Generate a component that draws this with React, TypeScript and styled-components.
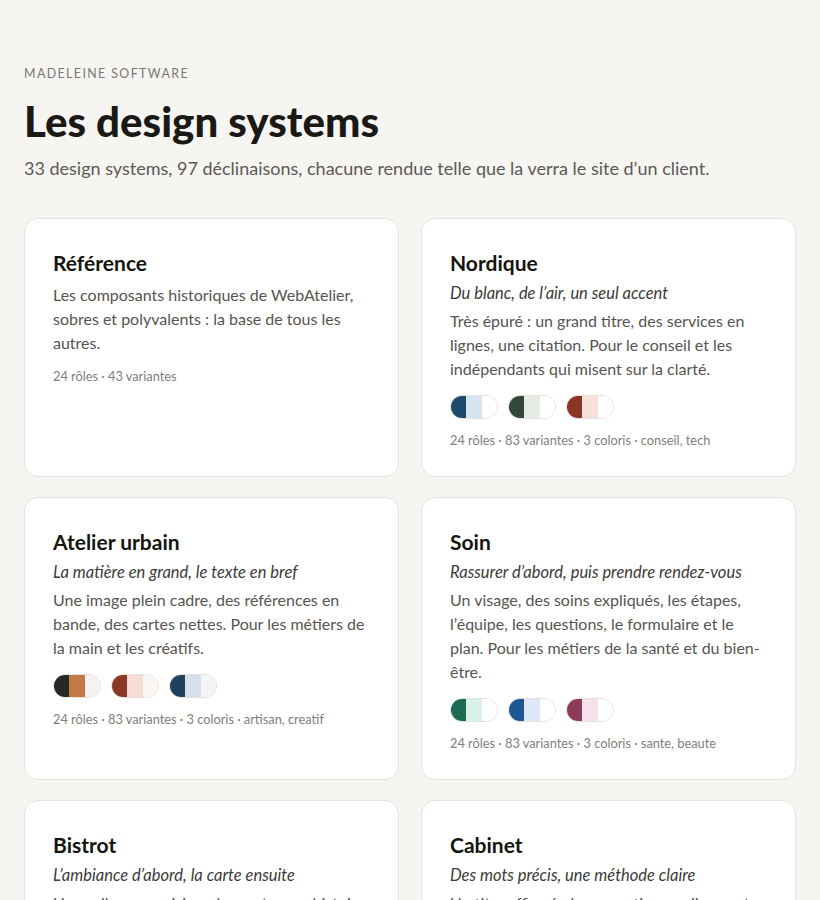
import React, { ReactElement } from 'react';
import styled, { createGlobalStyle } from 'styled-components';

interface System {
  name: string;
  tagline?: string;
  description: string;
  meta: string;
  palettes?: string[][];
}

const systems: System[] = [
  {
    name: 'Référence',
    description:
      'Les composants historiques de WebAtelier, sobres et polyvalents : la base de tous les autres.',
    meta: '24 rôles · 43 variantes',
  },
  {
    name: 'Nordique',
    tagline: 'Du blanc, de l’air, un seul accent',
    description:
      'Très épuré : un grand titre, des services en lignes, une citation. Pour le conseil et les indépendants qui misent sur la clarté.',
    meta: '24 rôles · 83 variantes · 3 coloris · conseil, tech',
    palettes: [
      ['#1b4a6d', '#d5e4ef', '#ffffff'],
      ['#33463a', '#e5ebe0', '#ffffff'],
      ['#8a3526', '#f7e1d8', '#ffffff'],
    ],
  },
  {
    name: 'Atelier urbain',
    tagline: 'La matière en grand, le texte en bref',
    description:
      'Une image plein cadre, des références en bande, des cartes nettes. Pour les métiers de la main et les créatifs.',
    meta: '24 rôles · 83 variantes · 3 coloris · artisan, creatif',
    palettes: [
      ['#262727', '#c47a44', '#f4f3f2'],
      ['#8b3626', '#f3ddd4', '#faf6f3'],
      ['#223f5d', '#d5e0ea', '#f3f5f7'],
    ],
  },
  {
    name: 'Soin',
    tagline: 'Rassurer d’abord, puis prendre rendez-vous',
    description:
      'Un visage, des soins expliqués, les étapes, l’équipe, les questions, le formulaire et le plan. Pour les métiers de la santé et du bien-être.',
    meta: '24 rôles · 83 variantes · 3 coloris · sante, beaute',
    palettes: [
      ['#1d6a55', '#d9f1ea', '#ffffff'],
      ['#1e5791', '#dde9f7', '#ffffff'],
      ['#8d3a5b', '#f7e1ea', '#ffffff'],
    ],
  },
  {
    name: 'Bistrot',
    tagline: 'L’ambiance d’abord, la carte ensuite',
    description:
      'Une salle, une cuisine, des mots, une histoire de la maison et la carte du jour. Pour les restaurants et les cafés.',
    meta: '24 rôles · 83 variantes · 3 coloris · restaurant',
  },
  {
    name: 'Cabinet',
    tagline: 'Des mots précis, une méthode claire',
    description:
      'Un titre affirmé, des expertises en lignes et une équipe présentée. Pour les avocats, notaires et experts.',
    meta: '24 rôles · 83 variantes · 3 coloris · juridique',
  },
];

const GlobalStyle = createGlobalStyle`
  html, body {
    margin: 0;
    padding: 0;
    background: #f6f5f2;
  }
  body {
    font-family: Lato, "Noto Sans", "Liberation Sans", sans-serif;
    color: #1a1a1a;
  }
`;

const Page = styled.main`
  padding: 66px 24px 40px;
`;

const Eyebrow = styled.div`
  font-size: 12.4px;
  letter-spacing: 1.4px;
  text-transform: uppercase;
  color: #7a7772;
`;

const Title = styled.h1`
  margin: 14px 0 0;
  font-size: 42px;
  line-height: 52px;
  font-weight: 900;
  color: #1a1916;
`;

const Lead = styled.p`
  margin: 8px 0 0;
  font-size: 18px;
  line-height: 26px;
  color: #5c5954;
`;

const Grid = styled.section`
  margin-top: 37px;
  display: grid;
  grid-template-columns: 1fr 1fr;
  gap: 20px 22px;
`;

const Card = styled.article`
  background: #fff;
  border: 1px solid #e6e3de;
  border-radius: 14px;
  padding: 30px 28px 27px;
  min-height: 200px;
`;

const CardTitle = styled.h2`
  margin: 0;
  font-size: 21px;
  line-height: 28px;
  font-weight: 700;
  color: #15140f;
`;

const Tagline = styled.p`
  margin: 5px 0 0;
  font-size: 16.5px;
  line-height: 22px;
  font-style: italic;
  color: #3d3b37;
`;

const Description = styled.p<{ $tight: boolean }>`
  margin: ${(p) => (p.$tight ? '5px' : '6px')} 0 0;
  font-size: 16px;
  line-height: 24px;
  color: #57544f;
`;

const Swatches = styled.div`
  display: flex;
  gap: 10px;
  margin-top: 14px;
`;

const Pill = styled.div`
  display: flex;
  width: 48px;
  height: 24px;
  border-radius: 12px;
  overflow: hidden;
  border: 1px solid #e4e2de;
  box-sizing: border-box;
`;

const Segment = styled.span<{ $color: string }>`
  flex: 1;
  background: ${(p) => p.$color};
`;

const Meta = styled.div`
  margin-top: 12px;
  font-size: 12.8px;
  line-height: 18px;
  color: #817e78;
`;

const SystemCard = ({ system }: { system: System }): ReactElement => (
  <Card>
    <CardTitle>{system.name}</CardTitle>
    {system.tagline && <Tagline>{system.tagline}</Tagline>}
    <Description $tight={!!system.tagline}>{system.description}</Description>
    {system.palettes && (
      <Swatches>
        {system.palettes.map((colors, i) => (
          <Pill key={i}>
            {colors.map((c, j) => (
              <Segment key={j} $color={c} />
            ))}
          </Pill>
        ))}
      </Swatches>
    )}
    <Meta>{system.meta}</Meta>
  </Card>
);

export default function App(): ReactElement {
  return (
    <>
      <GlobalStyle />
      <Page>
        <Eyebrow>Madeleine Software</Eyebrow>
        <Title>Les design systems</Title>
        <Lead>
          33 design systems, 97 déclinaisons, chacune rendue telle que la verra le site d’un
          client.
        </Lead>
        <Grid>
          {systems.map((s) => (
            <SystemCard key={s.name} system={s} />
          ))}
        </Grid>
      </Page>
    </>
  );
}
